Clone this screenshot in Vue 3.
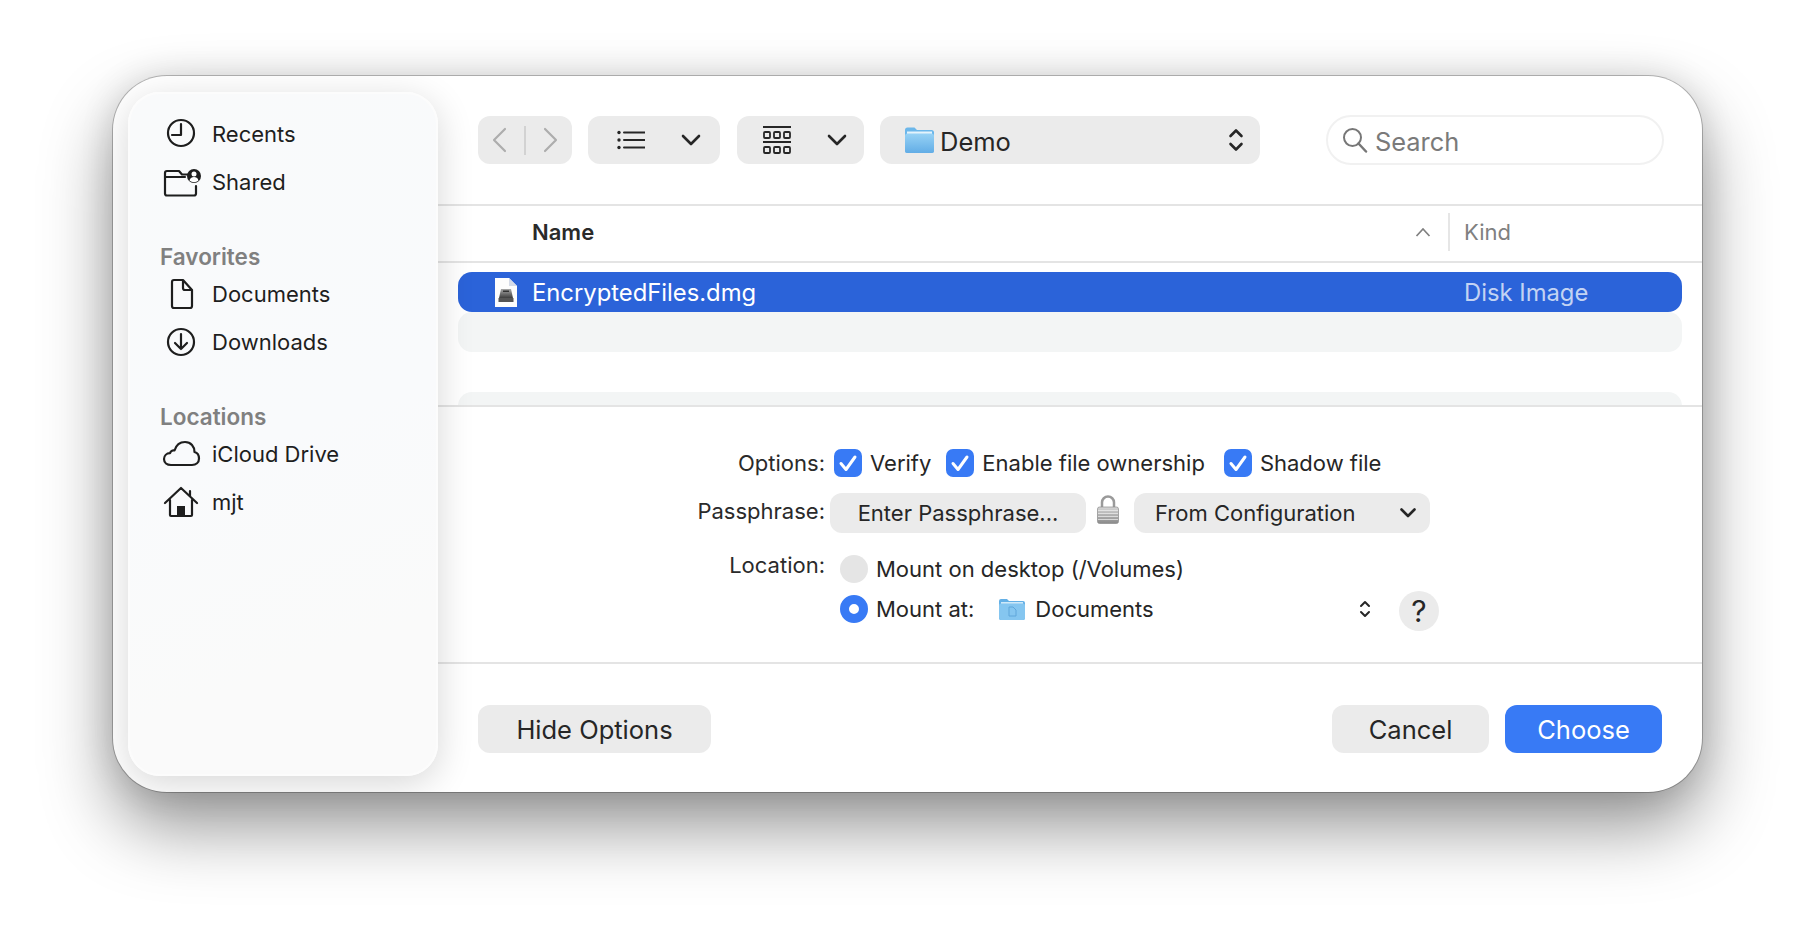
<script setup>
const checks = [
  { label: 'Verify' },
  { label: 'Enable file ownership' },
  { label: 'Shadow file' },
]
</script>

<template>
  <div class="page">
    <div class="window">
      <aside class="sidebar">
        <div class="item">
          <svg class="ico" viewBox="0 0 40 32"><circle cx="20" cy="15" r="13" /><path d="M20 6v11h-9" /></svg>
          <span>Recents</span>
        </div>
        <div class="item">
          <svg class="ico" viewBox="0 0 40 32"><path d="M35 20v7.500a2 2 0 0 1-2 2H6a2 2 0 0 1-2-2V7a2 2 0 0 1 2-2h12l3 3.500h6M4 11h20" /><circle class="fill" cx="33" cy="10" r="7" /><circle class="cut" cx="33" cy="8" r="2.500" /><path class="cut" d="M28.500 14.500c.8-2.600 2.500-3.500 4.500-3.500s3.700.9 4.500 3.500a7 7 0 0 1-9 0z" /></svg>
          <span>Shared</span>
        </div>
        <div class="label">Favorites</div>
        <div class="item">
          <svg class="ico" viewBox="0 0 40 32"><path d="M11 4a2 2 0 0 1 2-2h9l9 10v16a2 2 0 0 1-2 2H13a2 2 0 0 1-2-2zM22 2v8a2 2 0 0 0 2 2h7" /></svg>
          <span>Documents</span>
        </div>
        <div class="item">
          <svg class="ico" viewBox="0 0 40 32"><circle cx="20" cy="16" r="13" /><path d="M20 8v15M14 17l6 6 6-6" /></svg>
          <span>Downloads</span>
        </div>
        <div class="label">Locations</div>
        <div class="item">
          <svg class="ico" viewBox="0 0 40 32"><path d="M10 27c-4 0-7-2.500-7-6 0-3.200 2.500-5.700 6-5.800.5-2 2.500-3.200 4.500-2.700C15 7.500 19 4 24 4c6 0 9.500 4.500 9.500 10 3 .8 4.500 3.500 4.500 6.500 0 4-3 6.500-7 6.500z" /></svg>
          <span>iCloud Drive</span>
        </div>
        <div class="item">
          <svg class="ico" viewBox="0 0 40 32"><path d="M4 17L20 2l16 15M29 5v5M9 14v15a1 1 0 0 0 1 1h20a1 1 0 0 0 1-1V14" /><rect class="fill" x="16" y="20" width="8" height="10" /></svg>
          <span>mjt</span>
        </div>
      </aside>

      <main class="main">
        <header class="toolbar">
          <div class="btn nav">
            <svg width="16" height="26" viewBox="0 0 16 26"><path class="line muted" d="M14 2L3 13l11 11" /></svg>
            <i class="nav-sep"></i>
            <svg width="16" height="26" viewBox="0 0 16 26"><path class="line muted" d="M2 2l11 11L2 24" /></svg>
          </div>
          <div class="btn view list">
            <svg width="28" height="20" viewBox="0 0 28 20"><path class="line thin" d="M7 2.500h21M7 10h21M7 17.500h21" /><circle cx="2" cy="2.500" r="1.700" class="dot" /><circle cx="2" cy="10" r="1.700" class="dot" /><circle cx="2" cy="17.500" r="1.700" class="dot" /></svg>
            <svg width="20" height="12" viewBox="0 0 20 12"><path class="line" d="M2 2l8 8 8-8" /></svg>
          </div>
          <div class="btn view grid-view">
            <svg width="28" height="28" viewBox="0 0 28 28"><path class="line thin" d="M0 1h28M0 16h28" /><g class="cells"><rect x="1" y="6" width="6" height="6" rx="1" /><rect x="11" y="6" width="6" height="6" rx="1" /><rect x="21" y="6" width="6" height="6" rx="1" /><rect x="1" y="21" width="6" height="6" rx="1" /><rect x="11" y="21" width="6" height="6" rx="1" /><rect x="21" y="21" width="6" height="6" rx="1" /></g></svg>
            <svg width="20" height="12" viewBox="0 0 20 12"><path class="line" d="M2 2l8 8 8-8" /></svg>
          </div>
          <div class="btn path">
            <svg class="folder" width="29" height="26" viewBox="0 0 29 26">
              <defs><linearGradient id="fb" x1="0" y1="0" x2="0" y2="1"><stop offset="0" stop-color="#97d2f5" /><stop offset="1" stop-color="#62ade6" /></linearGradient></defs>
              <path d="M0 3a2.500 2.500 0 0 1 2.500-2.500h7l2.500 2.500h14.500A2.500 2.500 0 0 1 29 5.500v18a2.500 2.500 0 0 1-2.500 2.500h-24A2.500 2.500 0 0 1 0 23.500z" fill="#6cb7ea" />
              <path d="M2 4.500h25V7H2z" fill="#e4f3fc" />
              <rect x="0" y="6.500" width="29" height="19.500" rx="2.500" fill="url(#fb)" />
            </svg>
            <span class="path-name">Demo</span>
            <svg class="updown" width="16" height="24" viewBox="0 0 16 24"><path class="line" d="M2.500 8L8 2.500 13.500 8M2.500 16L8 21.500 13.500 16" /></svg>
          </div>
          <div class="search">
            <svg width="26" height="26" viewBox="0 0 26 26"><circle cx="10.500" cy="10.500" r="8.500" fill="none" stroke="#777" stroke-width="2" /><path d="M16.500 16.500L24 24.500" stroke="#777" stroke-width="2.500" stroke-linecap="round" /></svg>
            <span class="search-text">Search</span>
          </div>
        </header>

        <div class="head">
          <span class="col-name">Name</span>
          <svg class="caret" width="16" height="10" viewBox="0 0 16 10"><path d="M1.500 9L8 2l6.500 7" fill="none" stroke="#808080" stroke-width="1.700" /></svg>
          <i class="col-sep"></i>
          <span class="col-kind">Kind</span>
        </div>

        <div class="files">
          <div class="row selected">
            <svg class="dmg" width="22" height="29" viewBox="0 0 22 29">
              <defs><linearGradient id="dk" x1="0" y1="0" x2="0" y2="1"><stop offset="0" stop-color="#a8a8a8" /><stop offset="1" stop-color="#3d3d3d" /></linearGradient></defs>
              <path d="M0 0h14l8 8v21H0z" fill="#fdfdfd" />
              <path d="M14 0l8 8h-8z" fill="#d5dbe8" />
              <path d="M6 11h10l2 9H4z" fill="url(#dk)" />
              <rect x="3.500" y="20" width="15" height="4" fill="#555" />
              <rect x="8" y="12.500" width="6" height="1.500" fill="#333" />
            </svg>
            <span class="file-name">EncryptedFiles.dmg</span>
            <span class="file-kind">Disk Image</span>
          </div>
          <div class="row stripe"></div>
          <div class="row blank"></div>
          <div class="row stripe cut-row"></div>
        </div>

        <section class="options">
          <div class="opt-label">Options:</div>
          <div class="checks">
            <label v-for="c in checks" :key="c.label" class="check">
              <span class="box"><svg width="20" height="18" viewBox="0 0 20 18"><path d="M3 9.500l5 6L17 3" fill="none" stroke="#fff" stroke-width="3" stroke-linecap="round" stroke-linejoin="round" /></svg></span>
              <span>{{ c.label }}</span>
            </label>
          </div>

          <div class="opt-label pass-label">Passphrase:</div>
          <div class="pass">
            <div class="btn pass-btn">Enter Passphrase...</div>
            <svg class="lock" width="22" height="29" viewBox="0 0 22 29">
              <defs><linearGradient id="lk" x1="0" y1="0" x2="0" y2="1"><stop offset="0" stop-color="#d6d6d6" /><stop offset="1" stop-color="#8a8a8a" /></linearGradient></defs>
              <path d="M5 13V7.500a6 6 0 0 1 12 0V13" fill="none" stroke="#9a9a9a" stroke-width="2.500" />
              <rect x="0.500" y="12" width="21" height="16.500" rx="2" fill="url(#lk)" stroke="#8c8c8c" stroke-width="0.700" />
              <path d="M1 15.500h20M1 18.500h20M1 21.500h20M1 24.500h20" stroke="#f0f0f0" stroke-width="1" opacity=".7" />
            </svg>
            <div class="btn config">
              <span>From Configuration</span>
              <svg width="16" height="10" viewBox="0 0 16 10"><path class="line" d="M1.500 1.500L8 8l6.500-6.500" /></svg>
            </div>
          </div>

          <div class="opt-label loc-label">Location:</div>
          <div class="radios">
            <div class="radio-row">
              <span class="radio off"></span>
              <span>Mount on desktop (/Volumes)</span>
            </div>
            <div class="radio-row">
              <span class="radio on"></span>
              <span class="mount-at">Mount at:</span>
              <svg class="doc-folder" width="26" height="21" viewBox="0 0 26 21">
                <path d="M0 2a2 2 0 0 1 2-2h6l2 2h14a2 2 0 0 1 2 2v15a2 2 0 0 1-2 2H2a2 2 0 0 1-2-2z" fill="#64b0e6" />
                <path d="M2 3h22v2H2z" fill="#cfe9f9" />
                <rect y="4.500" width="26" height="16.500" rx="2" fill="#85c6f0" />
                <path d="M10 8h4l3 3v6h-7z" fill="none" stroke="#5fa6da" stroke-width="1" />
              </svg>
              <span class="doc-name">Documents</span>
              <svg class="mini-updown" width="12" height="18" viewBox="0 0 12 18"><path class="line thin" d="M2 6l4-4 4 4M2 12l4 4 4-4" /></svg>
              <span class="help">?</span>
            </div>
          </div>
        </section>

        <footer class="footer">
          <div class="btn act hide">Hide Options</div>
          <div class="spacer"></div>
          <div class="btn act cancel">Cancel</div>
          <div class="btn act choose">Choose</div>
        </footer>
      </main>
    </div>
  </div>
</template>

<style>
html, body { margin: 0; background: #fff; }
</style>

<style scoped>
.page {
  width: 1814px;
  height: 940px;
  box-sizing: border-box;
  padding: 76px 0 0 113px;
  overflow: hidden;
  font-family: Inter, "Liberation Sans", sans-serif;
  color: #262626;
  font-size: 22px;
}
.window {
  width: 1589px;
  height: 716px;
  box-sizing: border-box;
  display: flex;
  background: #fff;
  border-radius: 54px;
  overflow: hidden;
  box-shadow: 0 0 0 1px rgba(0, 0, 0, .24), 0 35px 70px rgba(0, 0, 0, .42), 0 0 34px rgba(0, 0, 0, .12);
}
.sidebar {
  width: 310px;
  flex: none;
  box-sizing: border-box;
  margin: 16px 0 16px 15px;
  padding: 16px 0 0 31px;
  background: linear-gradient(160deg, #f9fafb 0%, #f9fafc 50%, #fafafa 80%);
  border: 2px solid #fcfcfc;
  border-radius: 32px;
  box-shadow: 0 8px 36px rgba(0, 0, 0, .16);
  position: relative;
  z-index: 1;
}
.item {
  height: 48px;
  display: flex;
  align-items: center;
  gap: 11px;
  color: #1e1e1e;
}
.ico {
  width: 40px;
  height: 32px;
  flex: none;
  fill: none;
  stroke: #1e1e1e;
  stroke-width: 2.200;
  stroke-linecap: round;
  stroke-linejoin: round;
}
.ico .fill { fill: #1e1e1e; stroke: none; }
.ico .cut { fill: #fff; stroke: none; }
.label {
  height: 30px;
  line-height: 34px;
  margin-top: 34px;
  margin-left: -1px;
  font-weight: 600;
  font-size: 22.500px;
  color: #808080;
}
.main {
  flex: 1;
  min-width: 0;
  display: flex;
  flex-direction: column;
}
.toolbar {
  height: 130px;
  flex: none;
  box-sizing: border-box;
  padding: 40px 0 0 40px;
  display: flex;
  align-items: flex-start;
  gap: 16px;
  border-bottom: 2px solid #e4e4e4;
}
.btn {
  background: #ebebeb;
  border-radius: 12px;
  display: flex;
  align-items: center;
  box-sizing: border-box;
}
.line {
  fill: none;
  stroke: #262626;
  stroke-width: 2.600;
  stroke-linecap: round;
  stroke-linejoin: round;
}
.line.thin { stroke-width: 2; }
.line.muted { stroke: #adadad; stroke-width: 2.200; }
.dot { fill: #262626; }
.cells rect { fill: none; stroke: #262626; stroke-width: 1.800; }
.nav {
  width: 94px;
  height: 48px;
  justify-content: space-between;
  padding: 0 13px;
}
.nav-sep {
  width: 2px;
  height: 29px;
  background: #d2d2d2;
}
.view {
  height: 48px;
  justify-content: space-between;
}
.list { width: 132px; padding: 0 19px 0 29px; }
.grid-view { width: 127px; margin-left: 1px; padding: 0 17px 0 26px; }
.path {
  width: 380px;
  height: 48px;
  padding: 0 16px 0 25px;
}
.folder { flex: none; }
.path-name {
  margin-left: 6px;
  padding-top: 3px;
  font-size: 25.500px;
  flex: 1;
}
.search {
  width: 338px;
  height: 50px;
  margin: -1px 0 0 50px;
  box-sizing: border-box;
  border: 2px solid #f1f1f1;
  border-radius: 25px;
  display: flex;
  align-items: center;
  gap: 7px;
  padding-left: 14px;
  color: #7a7a7a;
  font-size: 25.400px;
}
.search-text { padding-top: 2px; }
.head {
  height: 57px;
  flex: none;
  box-sizing: border-box;
  display: flex;
  align-items: center;
  padding: 0 0 3px 94px;
  border-bottom: 2px solid #e4e4e4;
}
.col-name { font-weight: 600; font-size: 22px; color: #2a2a2a; }
.caret { margin-left: auto; }
.col-sep {
  width: 2px;
  height: 38px;
  background: #e6e6e6;
  margin: 0 14px 0 17px;
}
.col-kind {
  width: 238px;
  color: #808080;
  font-size: 22px;
}
.files {
  height: 144px;
  flex: none;
  box-sizing: border-box;
  padding: 9px 20px 0 20px;
  overflow: hidden;
  border-bottom: 2px solid #e4e4e4;
}
.row {
  height: 40px;
  border-radius: 14px;
  display: flex;
  align-items: center;
  box-sizing: border-box;
}
.selected {
  background: #2b63d9;
  color: #fff;
  padding-left: 37px;
}
.dmg { flex: none; }
.file-name { margin-left: 15px; font-size: 23.800px; flex: 1; }
.file-kind { width: 218px; color: #c3d3f3; font-size: 23.800px; }
.stripe { background: #f3f5f5; }
.options {
  height: 257px;
  flex: none;
  box-sizing: border-box;
  padding-top: 42px;
  display: grid;
  grid-template-columns: 387px 1fr;
  grid-auto-rows: min-content;
  column-gap: 5px;
  border-bottom: 2px solid #e4e4e4;
}
.opt-label {
  text-align: right;
  line-height: 28px;
  color: #2a2a2a;
}
.checks {
  display: flex;
  margin-left: 4px;
  height: 28px;
  gap: 15px;
}
.check {
  display: flex;
  align-items: center;
  gap: 8px;
}
.check:last-child { margin-left: 4px; }
.box {
  width: 28px;
  height: 28px;
  border-radius: 7px;
  background: #387af5;
  display: flex;
  align-items: center;
  justify-content: center;
}
.pass-label { margin-top: 16px; line-height: 36px; }
.pass {
  margin-top: 16px;
  display: flex;
  align-items: center;
}
.pass-btn {
  width: 256px;
  height: 40px;
  justify-content: center;
}
.lock { margin: -8px 0 0 11px; }
.config {
  width: 296px;
  height: 40px;
  margin-left: 15px;
  padding: 0 14px 0 21px;
  justify-content: space-between;
}
.loc-label { margin-top: 18px; }
.radios {
  margin-top: 22px;
  width: 609px;
  box-sizing: border-box;
  padding-left: 10px;
  display: flex;
  flex-direction: column;
  gap: 12px;
}
.radio-row {
  height: 28px;
  display: flex;
  align-items: center;
  gap: 8px;
}
.radio {
  width: 28px;
  height: 28px;
  border-radius: 50%;
  box-sizing: border-box;
  flex: none;
}
.radio.off { background: #e5e5e5; }
.radio.on { background: #fff; border: 9px solid #387af5; }
.doc-folder { margin-left: 17px; flex: none; }
.doc-name { margin-left: 2px; flex: 1; }
.mini-updown { flex: none; }
.help {
  width: 40px;
  height: 40px;
  flex: none;
  margin: 3px 0 0 20px;
  border-radius: 50%;
  background: #ebebeb;
  display: flex;
  align-items: center;
  justify-content: center;
  font-size: 30px;
  font-weight: 400;
}
.footer {
  flex: 1;
  box-sizing: border-box;
  padding: 41px 40px 0 40px;
  display: flex;
  align-items: flex-start;
  gap: 16px;
}
.act {
  height: 48px;
  justify-content: center;
  font-size: 25.500px;
}
.hide { width: 233px; }
.spacer { flex: 1; }
.cancel { width: 157px; }
.choose { width: 157px; background: #387af5; color: #fff; }
</style>
